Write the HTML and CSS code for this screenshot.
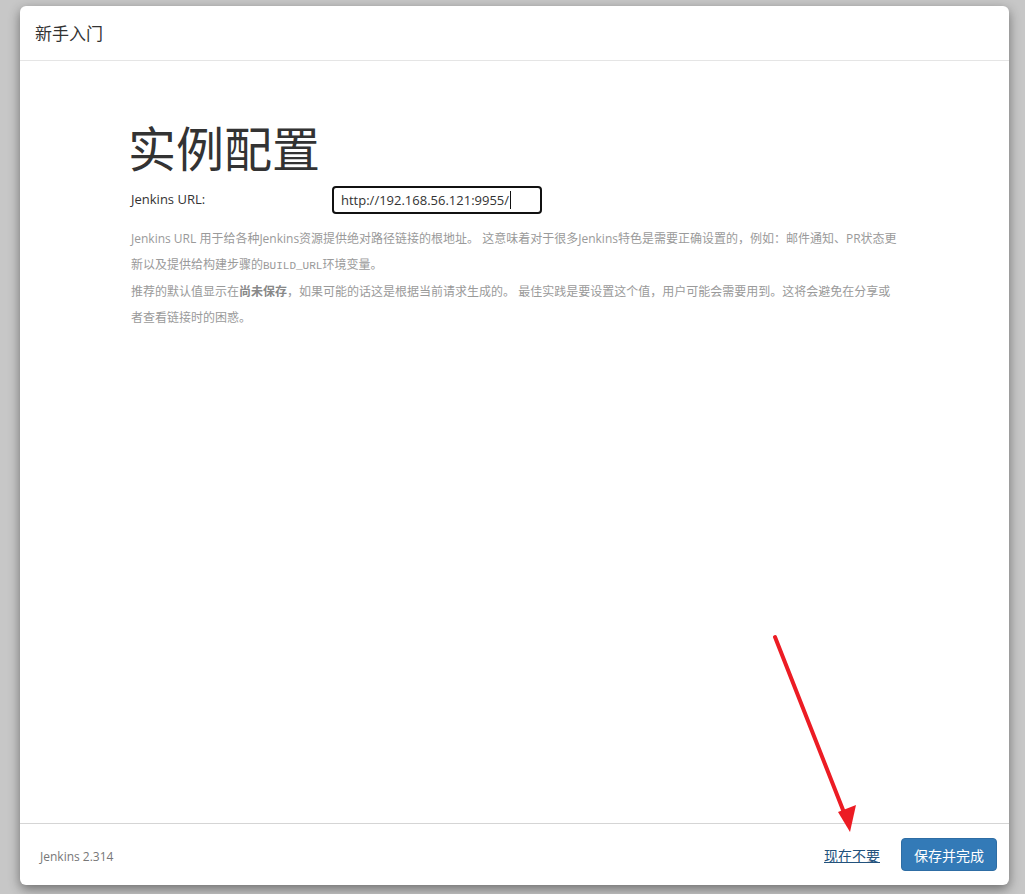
FILE: index.html
```html
<!DOCTYPE html>
<html lang="zh-CN">
<head>
<meta charset="utf-8">
<title>新手入门</title>
<link rel="stylesheet" href="styles.css">
</head>
<body>
<div class="modal">
  <div class="modal-header">
    <h4 class="modal-title">新手入门</h4>
  </div>
  <div class="modal-body">
    <div class="config">
      <h1 class="page-title">实例配置</h1>
      <div class="form-row">
        <label class="field-label">Jenkins URL:</label>
        <div class="url-input">http://192.168.56.121:9955/<span class="caret"></span></div>
      </div>
      <div class="help">
        <p>Jenkins URL 用于给各种Jenkins资源提供绝对路径链接的根地址。 这意味着对于很多Jenkins特色是需要正确设置的，例如：邮件通知、PR状态更新以及提供给构建步骤的<code>BUILD_URL</code>环境变量。</p>
        <p>推荐的默认值显示在<strong>尚未保存</strong>，如果可能的话这是根据当前请求生成的。 最佳实践是要设置这个值，用户可能会需要用到。这将会避免在分享或者查看链接时的困惑。</p>
      </div>
    </div>
  </div>
  <div class="modal-footer">
    <span class="version">Jenkins 2.314</span>
    <div class="actions">
      <a class="skip-link" href="#">现在不要</a>
      <button class="btn-primary" type="button">保存并完成</button>
    </div>
  </div>
</div>
<svg class="annotation" width="1025" height="894" viewBox="0 0 1025 894">
  <line x1="775" y1="637" x2="845" y2="815" stroke="#ec1c24" stroke-width="4" stroke-linecap="round"/>
  <polygon points="850,832 838,812 856,805" fill="#ec1c24"/>
</svg>
</body>
</html>
```

FILE: styles.css
```css
html, body {
  margin: 0;
  padding: 0;
}
body {
  width: 1025px;
  height: 894px;
  background: #c7c7c7;
  font-family: "Open Sans", "Noto Sans CJK SC", sans-serif;
  color: #333;
  overflow: hidden;
  position: relative;
}
.modal {
  box-sizing: border-box;
  margin: 6px 0 0 20px;
  width: 989px;
  height: 879px;
  background: #fff;
  border-radius: 6px;
  box-shadow: 0 4px 12px rgba(0, 0, 0, 0.45);
  display: flex;
  flex-direction: column;
}
.modal-header {
  box-sizing: border-box;
  height: 55px;
  padding: 15px 15px;
  border-bottom: 1px solid #e5e5e5;
}
.modal-title {
  margin: 0;
  font-size: 17px;
  font-weight: normal;
  line-height: 24px;
  color: #333;
  font-family: "Noto Sans CJK SC", sans-serif;
}
.modal-body {
  flex: 1;
  padding: 0 0 0 108px;
}
.config {
  width: 772px;
}
.page-title {
  margin: 53px 0 0 0;
  font-size: 48px;
  font-weight: normal;
  line-height: 64px;
  color: #333;
  font-family: "Noto Sans CJK SC", sans-serif;
}
.form-row {
  display: flex;
  align-items: flex-start;
  margin-top: 8px;
}
.field-label {
  width: 201px;
  padding-left: 3px;
  font-size: 13px;
  line-height: 20px;
  margin-top: 3px;
  color: #333;
}
.url-input {
  box-sizing: border-box;
  width: 210px;
  height: 28px;
  border: 2px solid #111;
  border-radius: 4px;
  padding: 0 7px;
  font-size: 13px;
  line-height: 24px;
  color: #333;
  display: flex;
  align-items: center;
  white-space: nowrap;
}
.caret {
  display: inline-block;
  width: 1px;
  height: 18px;
  background: #111;
  margin-left: 1px;
}
.help {
  margin-top: 12px;
  padding-left: 3px;
  font-size: 12px;
  line-height: 25.5px;
  color: #9a9a9a;
  font-family: "Open Sans", "Noto Sans CJK SC", sans-serif;
}
.help p {
  margin: 0;
}
.help code {
  font-family: "Liberation Mono", "DejaVu Sans Mono", monospace;
  font-size: 11px;
}
.help strong {
  font-weight: bold;
  color: #888;
}
.modal-footer {
  box-sizing: border-box;
  height: 62px;
  border-top: 1px solid #d5d5d5;
  padding: 0 12px 0 20px;
  display: flex;
  align-items: center;
  justify-content: space-between;
}
.version {
  font-size: 12px;
  color: #777;
  margin-top: 4px;
}
.actions {
  display: flex;
  align-items: center;
  gap: 21px;
}
.skip-link {
  font-size: 14px;
  color: #23527c;
  text-decoration: underline;
  font-family: "Noto Sans CJK SC", sans-serif;
}
.btn-primary {
  box-sizing: border-box;
  width: 96px;
  height: 33px;
  background: #337ab7;
  border: 1px solid #2e6da4;
  border-radius: 4px;
  color: #fff;
  font-size: 14px;
  font-family: "Noto Sans CJK SC", sans-serif;
  padding: 0;
}
.annotation {
  position: absolute;
  left: 0;
  top: 0;
  pointer-events: none;
}
```
